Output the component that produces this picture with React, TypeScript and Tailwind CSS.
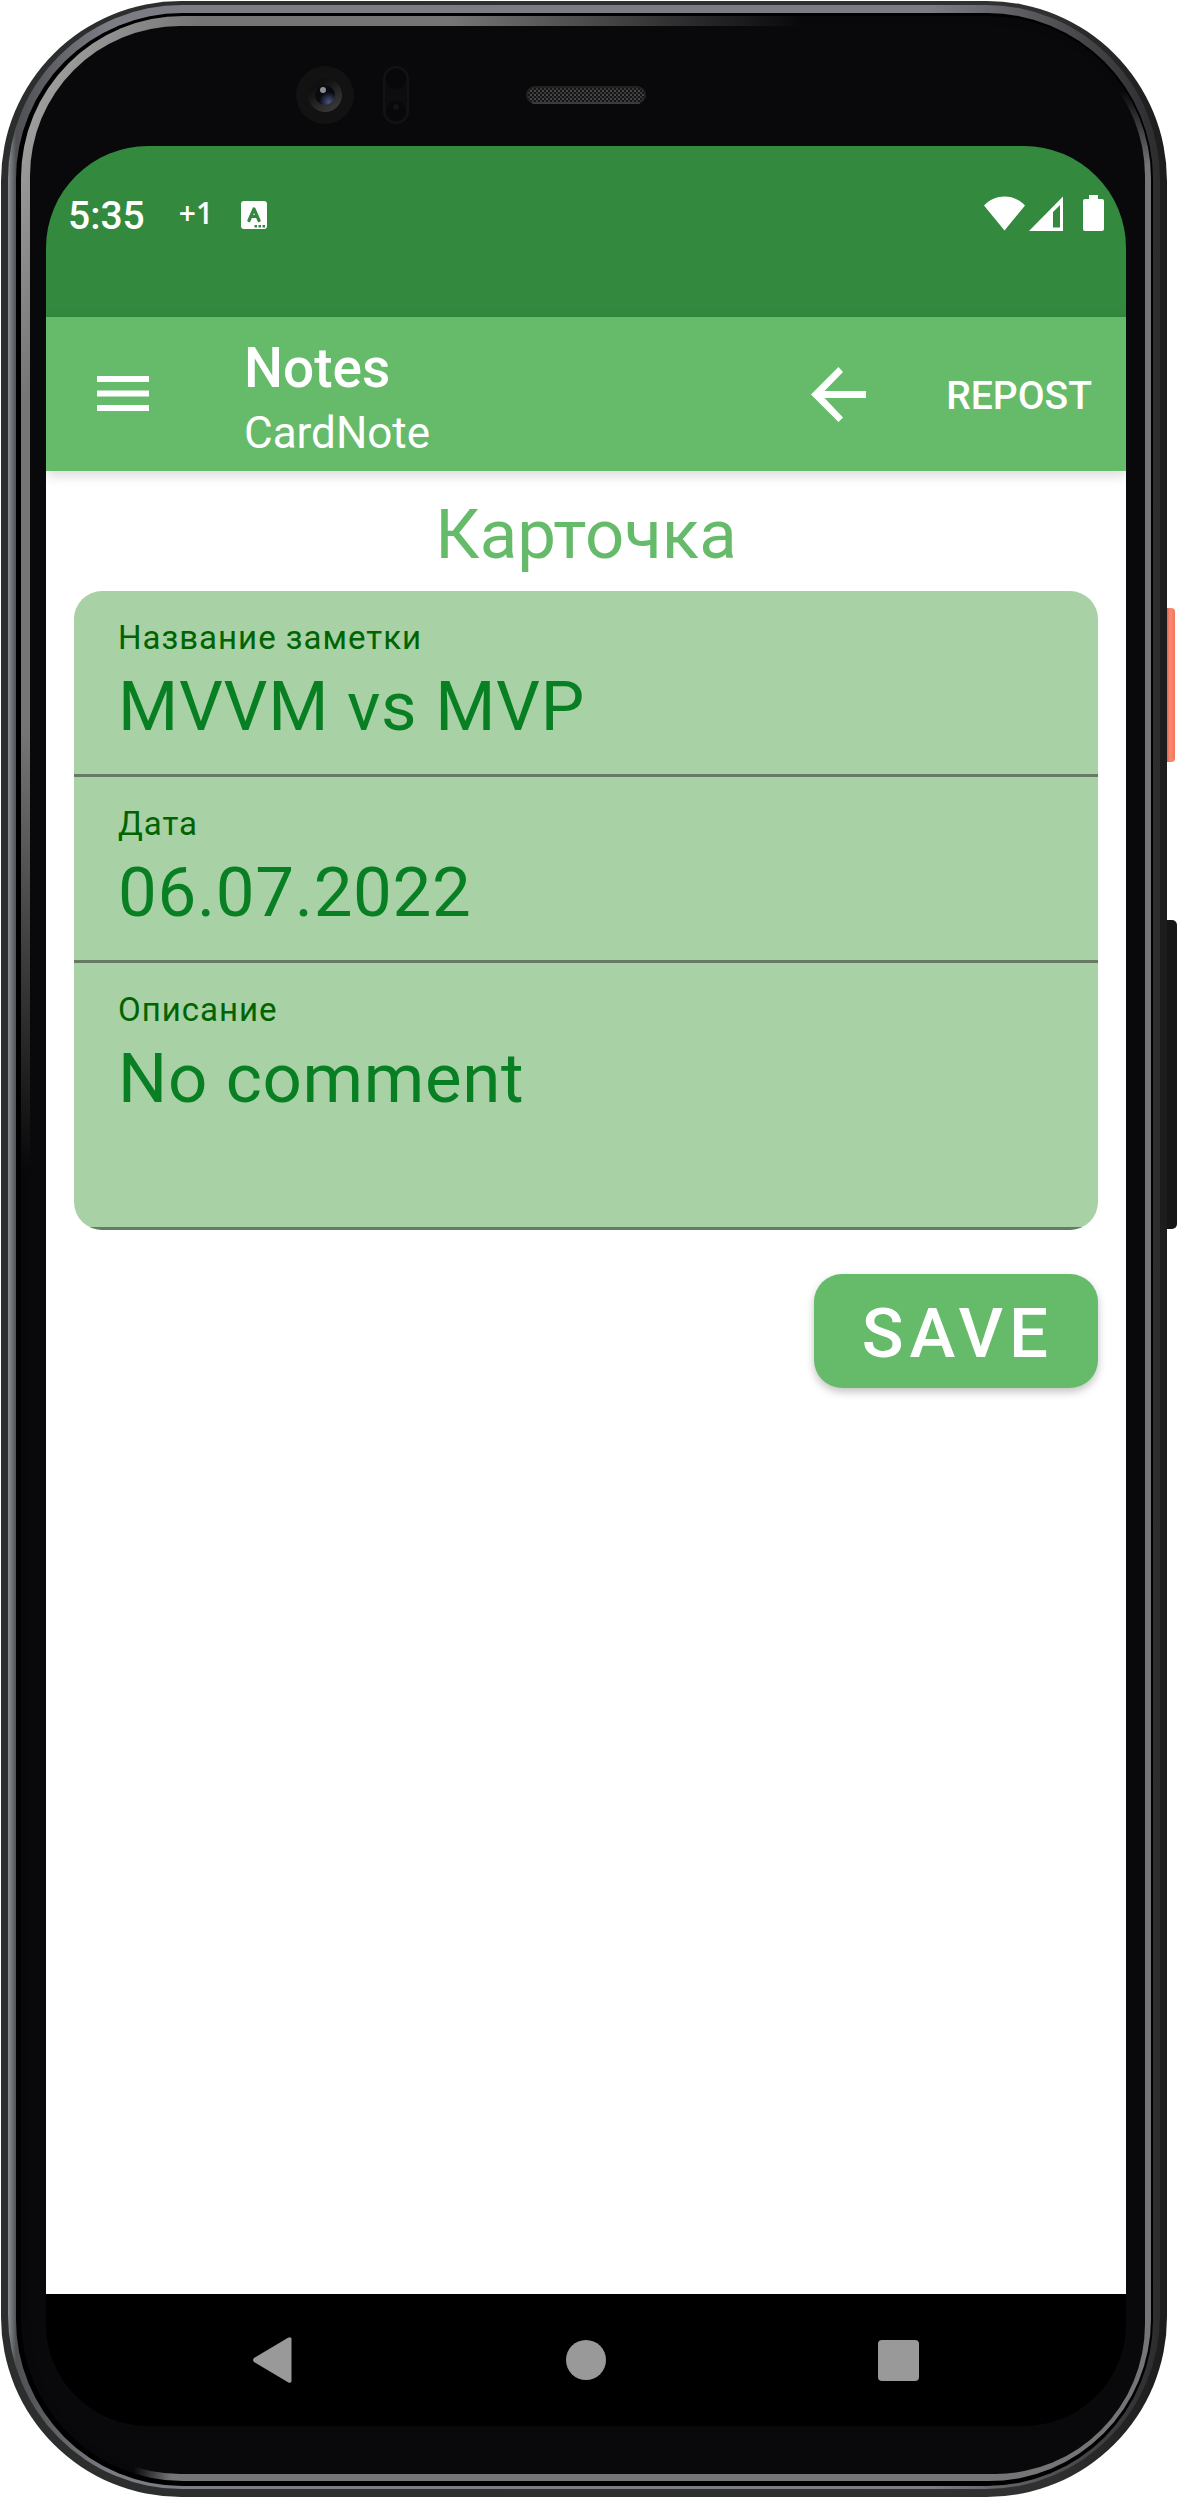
import React from "react";

function Camera() {
  return (
    <svg width="58" height="58" viewBox="0 0 58 58" aria-hidden="true">
      <defs>
        <linearGradient id="ring" x1="0" y1="0" x2="0.7" y2="1">
          <stop offset="0.3" stopColor="#101010" />
          <stop offset="1" stopColor="#3a3a3a" />
        </linearGradient>
        <radialGradient id="lens" cx="0.7" cy="0.85" r="0.7">
          <stop offset="0" stopColor="#4a5580" />
          <stop offset="0.7" stopColor="#0a0b12" />
        </radialGradient>
      </defs>
      <circle cx="29" cy="29" r="29" fill="#121212" />
      <circle cx="29" cy="29" r="17" fill="url(#ring)" />
      <circle cx="29" cy="29" r="10" fill="url(#lens)" />
      <circle cx="27" cy="24" r="3" fill="#8e8e8e" />
    </svg>
  );
}

function ProximitySensor() {
  return (
    <svg width="26" height="58" viewBox="0 0 26 58" aria-hidden="true">
      <rect x="1" y="1" width="24" height="56" rx="12" fill="#0d0d10" stroke="#131315" strokeWidth="2" />
      <circle cx="13" cy="13" r="10" fill="#08080a" />
      <circle cx="13" cy="45" r="10" fill="#08080a" />
      <circle cx="13" cy="41" r="3" fill="#131316" />
    </svg>
  );
}

function Speaker() {
  return (
    <svg width="120" height="18" viewBox="0 0 120 18" aria-hidden="true">
      <defs>
        <pattern id="mesh" width="4" height="4" patternUnits="userSpaceOnUse">
          <rect width="4" height="4" fill="#141414" />
          <rect width="2" height="2" fill="#484848" />
          <rect x="2" y="2" width="2" height="2" fill="#383838" />
        </pattern>
      </defs>
      <rect x="1" y="1" width="118" height="16" rx="8" fill="url(#mesh)" stroke="#222" strokeWidth="2" />
      <path d="M6 17H114" stroke="#555" />
    </svg>
  );
}

function StatusBar() {
  return (
    <div className="flex h-[171px] items-start justify-between bg-[#338a3e] pt-[44px] pr-[22px] pl-[22px] text-white">
      <div className="flex h-[50px] items-center">
        <span className="pt-[2px] text-[39px] leading-[50px] font-medium">5:35</span>
        <span className="ml-[34px] pb-[4px] font-['Open_Sans'] text-[30px] leading-[42px] font-semibold">+1</span>
        <svg className="ml-[28px]" width="26" height="28" viewBox="0 0 26 28" aria-hidden="true">
          <rect width="26" height="28" rx="3" fill="#fff" />
          <path d="M8 19.5L13 8L18 19.5M9.500 15.500H16.500" fill="none" stroke="#338a3e" strokeWidth="3.200" strokeLinecap="round" strokeLinejoin="round" />
          <path d="M13.500 24h2.500v2.500h-2.500zM17.500 24h2.500v2.500h-2.500zM21.500 24h2.500v2.500h-2.500z" fill="#338a3e" />
        </svg>
      </div>
      <div className="flex h-[46px] items-center">
        <svg width="41" height="36" viewBox="0 0 41 36" fill="#fff" aria-label="Wi-Fi">
          <path d="M0 10.500C11-1.500 30-1.500 41 10.500L20.500 35.500Z" />
        </svg>
        <svg className="ml-1" width="34" height="36" viewBox="0 0 34 36" fill="#fff" aria-label="Signal">
          <path fillRule="evenodd" d="M34 1.500V36H0ZM31 10L24 17V32.500H31Z" />
        </svg>
        <svg className="ml-5" width="21" height="36" viewBox="0 0 21 36" fill="#fff" aria-label="Battery">
          <path d="M6 0h9v4h4a2 2 0 0 1 2 2v28a2 2 0 0 1-2 2H2a2 2 0 0 1-2-2V6a2 2 0 0 1 2-2h4z" />
        </svg>
      </div>
    </div>
  );
}

function AppBar() {
  return (
    <header className="relative flex h-[154px] items-center bg-[#66bb6a] pr-[34px] pl-[51px] text-white shadow-[0_4px_12px_rgba(0,0,0,0.16)]">
      <button type="button" aria-label="Menu" className="shrink-0">
        <svg width="52" height="36" viewBox="0 0 52 36" fill="#fff">
          <path d="M0 0h52v6H0zM0 14.500h52v6H0zM0 29h52v6H0z" />
        </svg>
      </button>
      <div className="ml-[95px] flex-1 pt-[12px]">
        <h1 className="text-[55px] leading-[66px] font-medium">Notes</h1>
        <p className="text-[44px] leading-[64px]">CardNote</p>
      </div>
      <button type="button" aria-label="Back">
        <svg width="55" height="55" viewBox="0 0 55 55" fill="#fff">
          <path d="M55 24H13.500L32 5L27.500 0L0 27.500L27.500 55L32 50.500L13.500 31H55Z" />
        </svg>
      </button>
      <button type="button" className="ml-20 pt-[3px] text-[39px] leading-[46px] font-medium">
        REPOST
      </button>
    </header>
  );
}

function Field({ id, label, value }: { id: string; label: string; value: string }) {
  return (
    <div className="flex h-[186px] flex-col border-b-[3px] border-[#657b63] px-[44px] pt-[27px]">
      <label htmlFor={id} className="text-[33px] leading-[40px] tracking-[1px] text-[#006400]">
        {label}
      </label>
      <input
        id={id}
        defaultValue={value}
        className="h-[98px] w-full bg-transparent text-[69px] leading-[98px] tracking-[0.01em] text-[#087f23] outline-none"
      />
    </div>
  );
}

function NoteForm() {
  return (
    <form className="flex flex-1 flex-col bg-white px-[28px] pt-[22px]">
      <h2 className="text-center text-[69px] leading-[84px] text-[#66bb6a]">Карточка</h2>
      <div className="mt-[14px] overflow-hidden rounded-[28px] bg-[#a8d1a5]">
        <Field id="title" label="Название заметки" value="MVVM vs MVP" />
        <Field id="date" label="Дата" value="06.07.2022" />
        <div className="flex h-[267px] flex-col border-b-[3px] border-[#657b63] px-[44px] pt-[27px]">
          <label htmlFor="description" className="text-[33px] leading-[40px] tracking-[1px] text-[#006400]">
            Описание
          </label>
          <textarea
            id="description"
            defaultValue="No comment"
            className="w-full flex-1 resize-none overflow-hidden bg-transparent text-[69px] leading-[98px] tracking-[0.01em] text-[#087f23] outline-none"
          />
        </div>
      </div>
      <button
        type="button"
        className="mt-[44px] h-[114px] self-end rounded-[28px] bg-[#66bb6a] pt-[6px] pr-[44px] pl-[48px] text-[69px] leading-[108px] font-medium tracking-[6px] text-white shadow-[0_4px_8px_rgba(0,0,0,0.24)]"
      >
        SAVE
      </button>
    </form>
  );
}

function NavigationBar() {
  return (
    <nav className="grid h-[132px] grid-cols-3 place-items-center bg-black px-[72px]">
      <button type="button" aria-label="Back">
        <svg width="44" height="46" viewBox="0 0 44 46" fill="#999">
          <path d="M39.500 1.500V44.500Q38.500 46.500 36 45.200L2 25Q0 23 2 21L36 0.800Q38.500-0.500 39.500 1.500Z" />
        </svg>
      </button>
      <button type="button" aria-label="Home" className="size-10 rounded-full bg-[#999]" />
      <button type="button" aria-label="Recent apps" className="size-[41px] rounded-[4px] bg-[#999]" />
    </nav>
  );
}

export default function App() {
  return (
    <div className="relative flex min-h-screen flex-col bg-white py-px pr-[11px] pl-px font-[Roboto,sans-serif]">
      <div className="absolute top-[608px] right-[3px] h-[154px] w-3 rounded-[4px] bg-[linear-gradient(to_right,#e8644a_4px,#f98a74_7px,#f4745a)]" />
      <div className="absolute top-[920px] right-px h-[309px] w-4 rounded-[5px] bg-[#161616]" />
      <div className="relative flex flex-1 flex-col rounded-[180px] bg-[linear-gradient(to_right,#2c2e2d,#303030_90%,#1c1c1c)] pt-[4px] pr-[7px] pb-[8px] pl-[7px]">
        <div className="flex flex-1 flex-col rounded-[174px] bg-[linear-gradient(to_right,#8b8f95,#4e5054_8px,#7c7c84_100px,#7c7c84_80%,#2b2c2e)] pt-[8px] pr-[7px] pb-[3px] pl-[8px]">
          <div className="flex flex-1 flex-col rounded-[166px] bg-black pt-[3px] pr-[2px] pb-[5px] pl-[5px]">
            <div className="flex flex-1 flex-col rounded-[162px] bg-[radial-gradient(ellipse_700px_150px_at_100%_0,#08080a_50%,transparent),radial-gradient(ellipse_150px_1750px_at_0_100%,#08080a_75%,transparent),linear-gradient(to_bottom_right,#b0b0b0,#757575_8%,#757575)] pt-[10px] pr-[6px] pb-[7px] pl-[9px]">
              <div className="flex flex-1 flex-col rounded-[150px] bg-[#09090c] pr-[19px] pb-[48px] pl-[16px]">
                <div className="grid h-[120px] grid-cols-[1fr_auto_1fr] items-center pt-[18px]">
                  <div className="flex items-center justify-end gap-[29px] pr-[117px]">
                    <Camera />
                    <ProximitySensor />
                  </div>
                  <Speaker />
                </div>
                <div className="flex flex-1 flex-col overflow-hidden rounded-[102px]">
                  <StatusBar />
                  <AppBar />
                  <NoteForm />
                  <NavigationBar />
                </div>
              </div>
            </div>
          </div>
        </div>
      </div>
    </div>
  );
}
